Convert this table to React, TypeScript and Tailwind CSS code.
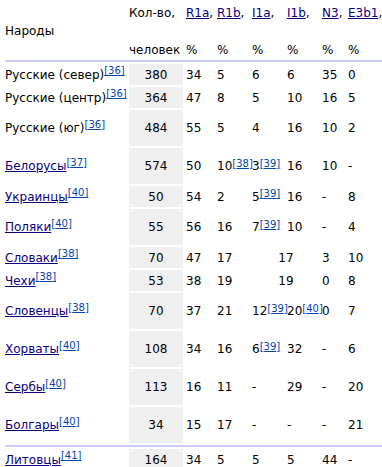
type Cell = { v: string; sup?: string } | null;

type Row = {
    name: string;
    link: boolean;
    ref: string;
    count: string;
    tall: boolean;
    vals: Cell[];
    merged?: string; // I1a + I1b объединены
};

const c = (v: string, sup?: string): Cell => ({ v, sup });

const rows: Row[] = [
    { name: 'Русские (север)', link: false, ref: '36', count: '380', tall: false, vals: [c('34'), c('5'), c('6'), c('6'), c('35'), c('0')] },
    { name: 'Русские (центр)', link: false, ref: '36', count: '364', tall: false, vals: [c('47'), c('8'), c('5'), c('10'), c('16'), c('5')] },
    { name: 'Русские (юг)', link: false, ref: '36', count: '484', tall: true, vals: [c('55'), c('5'), c('4'), c('16'), c('10'), c('2')] },
    { name: 'Белорусы', link: true, ref: '37', count: '574', tall: true, vals: [c('50'), c('10', '38'), c('3', '39'), c('16'), c('10'), c('-')] },
    { name: 'Украинцы', link: true, ref: '40', count: '50', tall: false, vals: [c('54'), c('2'), c('5', '39'), c('16'), c('-'), c('8')] },
    { name: 'Поляки', link: true, ref: '40', count: '55', tall: true, vals: [c('56'), c('16'), c('7', '39'), c('10'), c('-'), c('4')] },
    { name: 'Словаки', link: true, ref: '38', count: '70', tall: false, vals: [c('47'), c('17'), null, null, c('3'), c('10')], merged: '17' },
    { name: 'Чехи', link: true, ref: '38', count: '53', tall: false, vals: [c('38'), c('19'), null, null, c('0'), c('8')], merged: '19' },
    { name: 'Словенцы', link: true, ref: '38', count: '70', tall: true, vals: [c('37'), c('21'), c('12', '39'), c('20', '40'), c('0'), c('7')] },
    { name: 'Хорваты', link: true, ref: '40', count: '108', tall: true, vals: [c('34'), c('16'), c('6', '39'), c('32'), c('-'), c('6')] },
    { name: 'Сербы', link: true, ref: '40', count: '113', tall: true, vals: [c('16'), c('11'), c('-'), c('29'), c('-'), c('20')] },
    { name: 'Болгары', link: true, ref: '40', count: '34', tall: true, vals: [c('15'), c('17'), c('-'), c('-'), c('-'), c('21')] },
];

const lastRow: Row = { name: 'Литовцы', link: true, ref: '41', count: '164', tall: false, vals: [c('34'), c('5'), c('5'), c('5'), c('44'), c('-')] };

const grid = 'grid grid-cols-[122px_54px_30px_33px_33px_33px_24px_1fr] gap-x-[2px]';

function Ref({ n }: { n: string }) {
    return (
        <sup className="relative -top-[3.5px] align-baseline text-[10px] leading-none">
            <a href="#" className="text-[#0645ad] underline">[{n}]</a>
        </sup>
    );
}

function Value({ cell }: { cell: Cell }) {
    if (!cell) return null;
    return (
        <span className="whitespace-nowrap">
            {cell.v}
            {cell.sup && <Ref n={cell.sup} />}
        </span>
    );
}

function DataRow({ row }: { row: Row }) {
    const h = row.tall ? 'h-[36px]' : 'h-[21px]';
    return (
        <div className={`${grid} ${h}`}>
            <div className="flex items-center whitespace-nowrap">
                {row.link ? (
                    <a href="#" className="text-[#0b0080] underline">{row.name}</a>
                ) : (
                    <span>{row.name}</span>
                )}
                <Ref n={row.ref} />
            </div>
            <div className="flex items-center justify-center bg-[#efefef]">{row.count}</div>
            <div className="flex items-center pl-[1px]"><Value cell={row.vals[0]} /></div>
            <div className="flex items-center"><Value cell={row.vals[1]} /></div>
            {row.merged ? (
                <div className="col-span-2 flex items-center justify-center">{row.merged}</div>
            ) : (
                <>
                    <div className="flex items-center"><Value cell={row.vals[2]} /></div>
                    <div className="flex items-center"><Value cell={row.vals[3]} /></div>
                </>
            )}
            <div className="flex items-center"><Value cell={row.vals[4]} /></div>
            <div className="flex items-center"><Value cell={row.vals[5]} /></div>
        </div>
    );
}

function HeadLink({ label, first }: { label: string; first?: boolean }) {
    return (
        <div className={`pt-[4px] leading-[18.3px] whitespace-nowrap ${first ? 'pl-[1px]' : ''}`}>
            <a href="#" className="text-[#0b0080] underline">{label}</a>,
            <br />
            <br />
            %
        </div>
    );
}

export default function App() {
    return (
        <div className="w-[382px] h-[467px] overflow-hidden bg-white pl-[5px] font-['DejaVu_Sans',sans-serif] text-[12px] leading-[18px] text-black">
            <div className="flex flex-col gap-y-[2px]">
                {/* Шапка таблицы */}
                <div className={`${grid} h-[58px]`}>
                    <div className="flex items-center pt-[4px]">Народы</div>
                    <div className="pt-[4px] leading-[18.3px] whitespace-nowrap">
                        Кол-во,
                        <br />
                        <br />
                        человек
                    </div>
                    <HeadLink label="R1a" first />
                    <HeadLink label="R1b" />
                    <HeadLink label="I1a" />
                    <HeadLink label="I1b" />
                    <HeadLink label="N3" />
                    <HeadLink label="E3b1" />
                </div>
                <div className="h-[2px] bg-[#ccccff]" />

                {rows.map((r) => (
                    <DataRow key={r.name} row={r} />
                ))}

                <div className="h-[2px] bg-[#ccccff]" />
                <DataRow row={lastRow} />
            </div>
        </div>
    );
}
